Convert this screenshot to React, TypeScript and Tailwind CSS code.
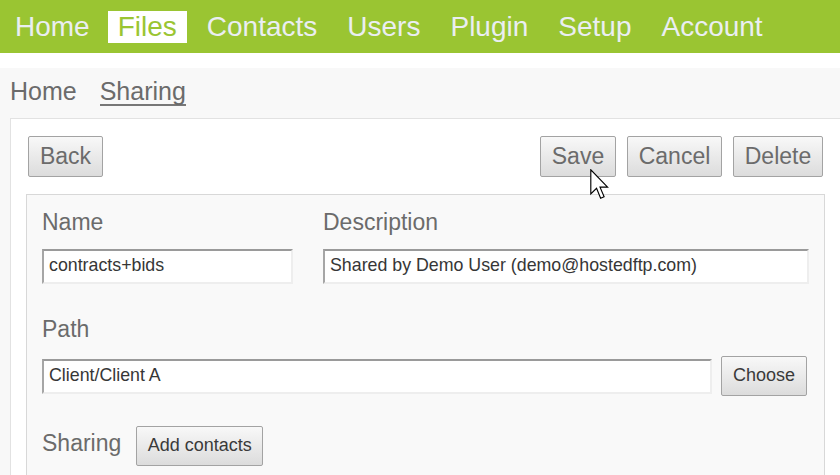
import React from "react";

const navItems = ["Home", "Files", "Contacts", "Users", "Plugin", "Setup", "Account"];

function Btn({ children, className = "" }: { children: React.ReactNode; className?: string }) {
  return (
    <button
      type="button"
      className={`flex items-center justify-center rounded-[2px] border border-[#a3a3a3] bg-gradient-to-b from-[#f8f8f8] to-[#dcdcdc] leading-none ${className}`}
    >
      {children}
    </button>
  );
}

function TextField({ value, className = "" }: { value: string; className?: string }) {
  return (
    <div
      className={`flex h-[35px] items-center border-2 border-t-[#9a9a9a] border-l-[#a6a6a6] border-b-[#eeeeee] border-r-[#eeeeee] bg-white pb-[1px] pl-[5px] text-[17.8px] leading-none text-[#363636] ${className}`}
    >
      {value}
    </div>
  );
}

function Cursor() {
  return (
    <svg
      className="absolute left-[590px] top-[169px]"
      width="19"
      height="31"
      viewBox="0 0 12.5 20.5"
    >
      <path
        d="M0.5 0.5 L0.5 16.5 L4.3 12.8 L7 19.3 L9.3 18.3 L6.6 12 L11.6 12 Z"
        fill="#ffffff"
        stroke="#000000"
        strokeWidth="0.75"
        strokeLinejoin="miter"
      />
    </svg>
  );
}

export default function App() {
  return (
    <div className="relative h-[475px] w-[840px] overflow-hidden bg-[#f8f8f8] font-['Liberation_Sans',Arial,sans-serif]">
      {/* top navigation */}
      <header className="flex h-[53px] items-center gap-[10px] bg-[#9ac532] pl-[3px]">
        {navItems.map((item, i) => (
          <div
            key={item}
            className={`flex h-[32px] items-center px-[10px] text-[28px] leading-none ${
              item === "Files" ? "bg-white text-[#9ac532]" : "text-[#eaeef2]"
            } ${i === 0 ? "pl-[12px] pr-[8px]" : ""}`}
          >
            {item}
          </div>
        ))}
      </header>
      <div className="h-[15px] bg-white" />

      {/* breadcrumb */}
      <nav className="flex h-[50px] items-start gap-[23px] pl-[10px] pt-[11px] text-[25px] leading-none text-[#6b6b6b]">
        <span>Home</span>
        <span className="border-b-2 border-[#777777]">Sharing</span>
      </nav>

      {/* outer panel */}
      <section className="ml-[10px] border-l border-t border-[#e2e2e2] bg-white px-[15px] pt-[17px] text-[#6b6b6b]">
        <div className="flex h-[41px] items-stretch justify-between px-[2px] text-[23px]">
          <Btn className="w-[75px]">Back</Btn>
          <div className="flex gap-[11px]">
            <Btn className="w-[76px]">Save</Btn>
            <Btn className="w-[95px]">Cancel</Btn>
            <Btn className="w-[90px]">Delete</Btn>
          </div>
        </div>

        {/* form panel */}
        <div className="mt-[17px] h-[300px] border border-[#d8d8d8] bg-[#f9f9f9] px-[15px] pt-[16px]">
          <div className="flex gap-[30px]">
            <div className="flex w-[251px] flex-col">
              <label className="mb-[15px] h-[23px] text-[23px] leading-none">Name</label>
              <TextField value="contracts+bids" />
            </div>
            <div className="flex flex-1 flex-col">
              <label className="mb-[15px] h-[23px] text-[23px] leading-none">Description</label>
              <TextField value="Shared by Demo User (demo@hostedftp.com)" />
            </div>
          </div>

          <label className="mb-[15px] mt-[34px] block h-[23px] text-[23px] leading-none">Path</label>
          <div className="mr-[2px] flex items-center gap-[9px]">
            <TextField value="Client/Client A" className="flex-1" />
            <Btn className="h-[40px] w-[86px] pb-[3px] text-[18px] text-[#3a3a3a]">Choose</Btn>
          </div>

          <div className="mt-[30px] flex items-start gap-[15px]">
            <span className="mt-[6px] text-[23px] leading-none">Sharing</span>
            <Btn className="h-[40px] w-[127px] pb-[3px] text-[18px] text-[#3a3a3a]">Add contacts</Btn>
          </div>
        </div>
      </section>

      <Cursor />
    </div>
  );
}
